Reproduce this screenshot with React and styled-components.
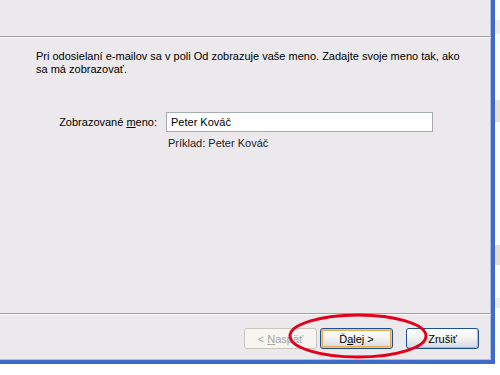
import React from "react"
import styled, { createGlobalStyle } from "styled-components"

const Global = createGlobalStyle`
  html, body { margin: 0; padding: 0; background: #ffffff; }
  body { width: 500px; height: 375px; overflow: hidden; }
`

const Desktop = styled.div`
  position: relative;
  width: 500px;
  height: 375px;
  background: #ffffff;
  font-family: Tahoma, "Liberation Sans", Arial, sans-serif;
  font-size: 11px;
  color: #000;
  overflow: hidden;
`

const Window = styled.div`
  width: 491px;
  height: 360px;
  background: #ece9ec;
  border-right: 4px solid #3d6bc9;
  border-bottom: 4px solid #3d6bc9;
  box-shadow: inset -1px -1px 0 #a9bfe8;
  display: flex;
  flex-direction: column;
`

const Header = styled.div`
  height: 36px;
  flex: none;
  border-bottom: 1px solid #a0a0a0;
  box-shadow: 0 1px 0 #ffffff;
`

const Body = styled.div`
  flex: 1;
  padding: 13px 20px 0 36px;
  display: flex;
  flex-direction: column;
`

const Intro = styled.p`
  margin: 0;
  line-height: 13px;
  width: 432px;
`

const Row = styled.div`
  display: grid;
  grid-template-columns: 121px 267px;
  column-gap: 9px;
  margin-top: 36px;
  align-items: center;
`

const Label = styled.label`
  text-align: right;
`

const Input = styled.div`
  height: 18px;
  border: 1px solid #a5acb5;
  background: #fff;
  padding: 0 4px;
  display: flex;
  align-items: center;
`

const Hint = styled.div`
  grid-column: 2;
  margin-top: 5px;
  padding-left: 2px;
  color: #222;
`

const Footer = styled.div`
  height: 47px;
  flex: none;
  border-top: 1px solid #a0a0a0;
  box-shadow: inset 0 1px 0 #ffffff;
  display: flex;
  justify-content: flex-end;
  align-items: flex-start;
  padding: 14px 12px 0 0;
  box-sizing: border-box;
`

const Button = styled.button`
  width: 73px;
  height: 21px;
  margin-left: ${p => p.$gap || 0}px;
  font-family: inherit;
  font-size: 11px;
  border-radius: 3px;
  padding: 0;
  color: ${p => (p.disabled ? "#a6a49a" : "#000")};
  border: 1px solid ${p => (p.disabled ? "#cac8bb" : "#1c4f8f")};
  background: ${p =>
    p.disabled
      ? "#f6f5f1"
      : "linear-gradient(#ffffff 0%, #f3f2ee 50%, #d8dde8 90%, #c2cbe0 100%)"};
  box-shadow: ${p =>
    p.$focus
      ? "inset 0 0 0 1px #f7c86b, inset 0 0 0 2px #e9a94c"
      : p.disabled
      ? "none"
      : "inset -1px -1px 0 #a9b7d6"};
  u { text-decoration: underline; }
`

const Wallpaper = styled.svg`
  position: absolute;
  right: 0;
  top: 0;
`

const Circle = styled.svg`
  position: absolute;
  left: 286px;
  top: 311px;
`

export default function App() {
  return (
    <Desktop>
      <Global />
      <Window>
        <Header />
        <Body>
          <Intro>
            Pri odosielaní e-mailov sa v poli Od zobrazuje vaše meno. Zadajte svoje meno tak, ako sa má zobrazovať.
          </Intro>
          <Row>
            <Label>
              Zobrazované <u>m</u>eno:
            </Label>
            <Input>Peter Kováč</Input>
            <Hint>Príklad: Peter Kováč</Hint>
          </Row>
        </Body>
        <Footer>
          <Button disabled>
            &lt; <u>N</u>aspäť
          </Button>
          <Button $gap={3} $focus>
            Ď<u>a</u>lej &gt;
          </Button>
          <Button $gap={13}>Zrušiť</Button>
        </Footer>
      </Window>
      <Wallpaper width="5" height="375" viewBox="0 0 5 375">
        <rect x="0" y="20" width="5" height="14" fill="#f3ede0" />
        <rect x="0" y="100" width="5" height="22" fill="#ece2cc" />
        <rect x="0" y="245" width="5" height="20" fill="#eadfc6" />
        <rect x="0" y="298" width="5" height="10" fill="#f3ede0" />
      </Wallpaper>
      <Circle width="144" height="50" viewBox="0 0 144 50">
        <ellipse cx="72" cy="25" rx="68" ry="21" fill="none" stroke="#e3001b" strokeWidth="3" />
      </Circle>
    </Desktop>
  )
}
